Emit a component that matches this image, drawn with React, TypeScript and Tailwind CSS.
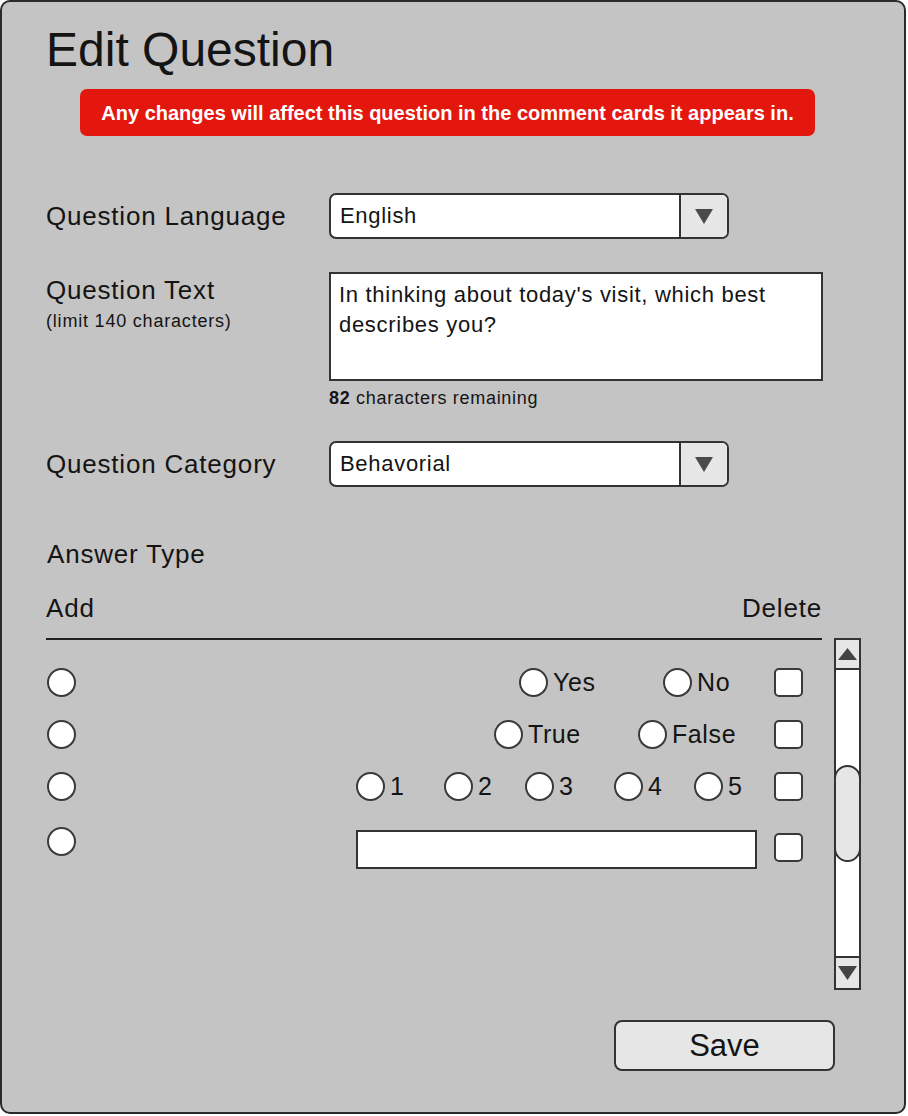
import React from "react";

const Radio = () => (
  <span className="block w-[29px] h-[29px] shrink-0 rounded-full border-2 border-[#3a3a3a] bg-white" />
);

const Check = () => (
  <span className="block w-[29px] h-[29px] shrink-0 rounded-[5px] border-2 border-[#3a3a3a] bg-white" />
);

const Option = ({ label, width }: { label: string; width: string }) => (
  <div className={`flex items-center gap-[5px] ${width}`}>
    <Radio />
    <span className="text-[25px] leading-none tracking-[0.6px]">{label}</span>
  </div>
);

const Caret = () => (
  <svg width="18" height="15" viewBox="0 0 18 15">
    <polygon points="0,0 18,0 9,15" fill="#4a4a4a" />
  </svg>
);

const Select = ({ value }: { value: string }) => (
  <div className="flex w-[400px] h-[46px] rounded-[7px] border-2 border-[#333] bg-white overflow-hidden">
    <div className="flex-1 flex items-center pl-[9px] text-[22px] leading-none tracking-[0.7px]">
      {value}
    </div>
    <div className="w-[48px] border-l-2 border-[#333] bg-[#e6e6e6] flex items-center justify-center">
      <Caret />
    </div>
  </div>
);

const Label = ({ children }: { children: React.ReactNode }) => (
  <div className="text-[26px] leading-none tracking-[0.8px]">{children}</div>
);

const Scrollbar = () => (
  <div className="w-[27px] h-[352px] shrink-0 border-2 border-[#333] bg-white flex flex-col">
    <div className="h-[30px] border-b-2 border-[#333] bg-[#e6e6e6] flex items-center justify-center">
      <svg width="19" height="12" viewBox="0 0 19 12">
        <polygon points="9.5,0 19,12 0,12" fill="#444" />
      </svg>
    </div>
    <div className="flex-1 pt-[95px]">
      <div className="w-[27px] -ml-[2px] h-[97px] rounded-full border-2 border-[#333] bg-[#e6e6e6]" />
    </div>
    <div className="h-[32px] border-t-2 border-[#333] bg-[#e6e6e6] flex items-center justify-center">
      <svg width="19" height="14" viewBox="0 0 19 14">
        <polygon points="0,0 19,0 9.5,14" fill="#444" />
      </svg>
    </div>
  </div>
);

export default function App() {
  return (
    <div
      className="w-[908px] h-[1116px] bg-white text-[#141414]"
      style={{ fontFamily: '"Liberation Sans", Arial, sans-serif' }}
    >
      <div className="w-[906px] h-[1114px] rounded-[10px] border-2 border-[#2a2a2a] bg-[#c4c4c4] pl-[44px] pr-[43px] pt-[24px] flex flex-col">
        <h1 className="text-[48px] leading-none">Edit Question</h1>

        <div className="mt-[15px] ml-[34px] w-[735px] h-[47px] rounded-[7px] bg-[#e4170f] flex items-center justify-center text-white font-bold text-[20px] leading-none">
          Any changes will affect this question in the comment cards it appears in.
        </div>

        <div className="mt-[57px] flex items-center">
          <div className="w-[283px]">
            <Label>Question Language</Label>
          </div>
          <Select value="English" />
        </div>

        <div className="mt-[33px] flex items-start">
          <div className="w-[283px] pt-[5px]">
            <Label>Question Text</Label>
            <div className="mt-[9px] text-[18px] leading-none tracking-[0.8px]">
              (limit 140 characters)
            </div>
          </div>
          <div>
            <div className="w-[494px] h-[109px] border-2 border-[#333] bg-white pt-[6px] pl-[8px] text-[22px] leading-[30px] tracking-[0.7px]">
              In thinking about today's visit, which best
              <br />
              describes you?
            </div>
            <div className="mt-[8px] text-[18px] leading-none tracking-[0.7px]">
              <span className="font-bold">82</span> characters remaining
            </div>
          </div>
        </div>

        <div className="mt-[34px] flex items-center">
          <div className="w-[283px]">
            <Label>Question Category</Label>
          </div>
          <Select value="Behavorial" />
        </div>

        <div className="mt-[54px] ml-[1px]">
          <Label>Answer Type</Label>
        </div>

        <div className="mt-[28px] w-[776px] flex justify-between">
          <Label>Add</Label>
          <Label>Delete</Label>
        </div>

        <div className="mt-[17px] flex items-start gap-[12px]">
          <div className="w-[776px] border-t-2 border-[#222] pt-[16px]">
            <div className="h-[52px] flex items-center justify-between pl-[1px] pr-[19px]">
              <Radio />
              <div className="flex items-center">
                <Option label="Yes" width="w-[144px]" />
                <Option label="No" width="w-[111px]" />
                <Check />
              </div>
            </div>
            <div className="h-[52px] flex items-center justify-between pl-[1px] pr-[19px]">
              <Radio />
              <div className="flex items-center">
                <Option label="True" width="w-[144px]" />
                <Option label="False" width="w-[136px]" />
                <Check />
              </div>
            </div>
            <div className="h-[52px] flex items-center justify-between pl-[1px] pr-[19px]">
              <Radio />
              <div className="flex items-center">
                <Option label="1" width="w-[88px]" />
                <Option label="2" width="w-[81px]" />
                <Option label="3" width="w-[89px]" />
                <Option label="4" width="w-[80px]" />
                <Option label="5" width="w-[80px]" />
                <Check />
              </div>
            </div>
            <div className="h-[60px] flex items-start justify-between pl-[1px] pr-[19px]">
              <div className="mt-[15px]">
                <Radio />
              </div>
              <div className="flex items-start gap-[17px]">
                <div className="mt-[18px] w-[401px] h-[39px] border-2 border-[#333] bg-white" />
                <div className="mt-[21px]">
                  <Check />
                </div>
              </div>
            </div>
          </div>
          <Scrollbar />
        </div>

        <div className="mt-[30px] flex justify-end pr-[26px]">
          <button className="w-[221px] h-[51px] rounded-[8px] border-2 border-[#333] bg-[#e6e6e6] text-[31px] leading-none">
            Save
          </button>
        </div>
      </div>
    </div>
  );
}
